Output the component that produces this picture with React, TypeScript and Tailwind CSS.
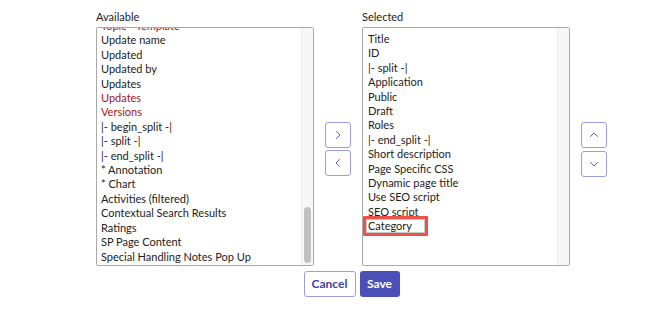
import React from "react";

const available: { t: string; red?: boolean }[] = [
  { t: "Topic - Template", red: true },
  { t: "Update name" },
  { t: "Updated" },
  { t: "Updated by" },
  { t: "Updates" },
  { t: "Updates", red: true },
  { t: "Versions", red: true },
  { t: "|- begin_split -|" },
  { t: "|- split -|" },
  { t: "|- end_split -|" },
  { t: "* Annotation" },
  { t: "* Chart" },
  { t: "Activities (filtered)" },
  { t: "Contextual Search Results" },
  { t: "Ratings" },
  { t: "SP Page Content" },
  { t: "Special Handling Notes Pop Up" },
];

const selected = [
  "Title",
  "ID",
  "|- split -|",
  "Application",
  "Public",
  "Draft",
  "Roles",
  "|- end_split -|",
  "Short description",
  "Page Specific CSS",
  "Dynamic page title",
  "Use SEO script",
  "SEO script",
];

function Chevron({ d }: { d: string }) {
  return (
    <svg width="14" height="14" viewBox="0 0 14 14" fill="none">
      <path d={d} stroke="#5b5fc7" strokeWidth="1" strokeLinecap="round" strokeLinejoin="round" />
    </svg>
  );
}

function IconBtn({ d }: { d: string }) {
  return (
    <div className="w-[26px] h-[26px] rounded-[3px] border border-[#9a9de6] bg-white flex items-center justify-center">
      <Chevron d={d} />
    </div>
  );
}

export default function App() {
  return (
    <div
      className="w-[656px] h-[311px] bg-white text-[#222] text-[11px] leading-[14.4px] overflow-hidden"
      style={{ fontFamily: "Lato, 'Noto Sans', sans-serif" }}
    >
      <div className="pl-[96px] pt-[10px] w-[511px] box-content">
        <div className="flex">
          {/* Available */}
          <div className="w-[218px] flex flex-col">
            <div className="h-[17px] leading-[14px] text-[11px]">Available</div>
            <div className="h-[239px] border border-[#a9a9a9] rounded-[2px] flex overflow-hidden">
              <div className="flex-1 overflow-hidden pl-[4px]">
                <div className="mt-[-9px]">
                  {available.map((a, i) => (
                    <div key={i} className={a.red ? "text-[#a3161b] whitespace-nowrap" : "whitespace-nowrap"}>
                      {a.t}
                    </div>
                  ))}
                </div>
              </div>
              <div className="w-[12px] bg-[#f7f7f7] border-l border-[#ececec] flex flex-col justify-end pb-[2px] items-center">
                <div className="w-[7px] h-[56px] rounded-full bg-[#c1c1c1]" />
              </div>
            </div>
          </div>
          {/* move buttons */}
          <div className="w-[48px] flex flex-col items-center pt-[112px] gap-[2px]">
            <IconBtn d="M5.5 3.5 L9 7 L5.5 10.5" />
            <IconBtn d="M8.5 3.5 L5 7 L8.5 10.5" />
          </div>
          {/* Selected */}
          <div className="w-[208px] flex flex-col">
            <div className="h-[17px] leading-[14px] text-[11px]">Selected</div>
            <div className="h-[239px] border border-[#a9a9a9] rounded-[2px] flex overflow-hidden">
              <div className="flex-1 overflow-hidden pl-[5px] pt-[4px]">
                {selected.map((s, i) => (
                  <div key={i} className="whitespace-nowrap">
                    {s}
                  </div>
                ))}
                <div className="relative">
                  <div className="whitespace-nowrap">Category</div>
                  <div className="absolute left-[-5px] top-[-3px] w-[65px] h-[20px] border-[3px] border-[#ec5247] rounded-[1px]">
                    <div className="w-full h-full border border-[#c9c9c9]" />
                  </div>
                </div>
              </div>
              <div className="w-[12px] bg-[#f7f7f7] border-l border-[#ececec]" />
            </div>
          </div>
          {/* order buttons */}
          <div className="w-[37px] flex flex-col items-end pt-[112px] gap-[3px]">
            <IconBtn d="M3.5 8.5 L7 5 L10.5 8.5" />
            <IconBtn d="M3.5 5.5 L7 9 L10.5 5.5" />
          </div>
        </div>
        <div className="flex justify-center gap-[4px] mt-[5px]">
          <div className="w-[52px] h-[26px] rounded-[3px] border border-[#9a9de6] text-[#3f42a8] font-bold flex items-center justify-center text-[12px]">
            Cancel
          </div>
          <div className="w-[40px] h-[26px] rounded-[3px] bg-[#4b4fb8] text-white font-bold flex items-center justify-center text-[12px]">
            Save
          </div>
        </div>
      </div>
    </div>
  );
}
